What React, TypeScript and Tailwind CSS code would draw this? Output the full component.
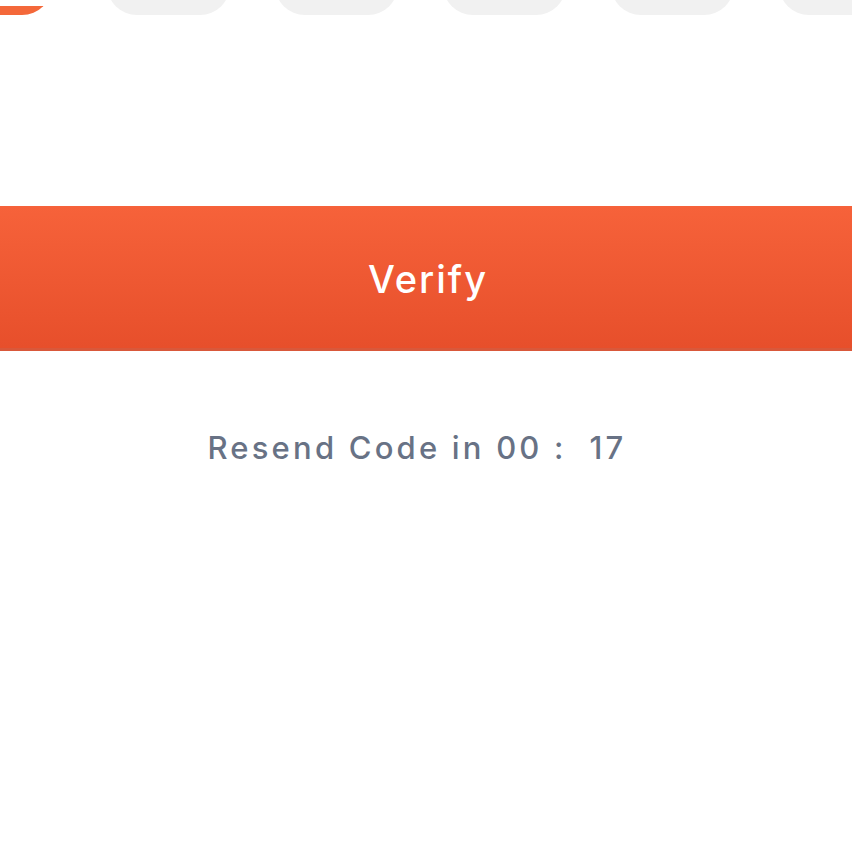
const boxes = [0, 1, 2, 3, 4]

export default function App() {
  return (
    <div className="w-[852px] h-[852px] bg-white overflow-hidden" style={{ fontFamily: 'Inter, "Open Sans", sans-serif' }}>
      <div className="flex items-end h-[15px] ml-[-72px]">
        <div className="shrink-0 w-[124px] h-[9px] overflow-hidden">
          <div className="w-[124px] h-[60px] mt-[-51px] rounded-[30px] bg-[#F4683A]" />
        </div>
        {boxes.map((i) => (
          <div key={i} className={(i === 0 ? "ml-[55px] " : "ml-[45px] ") + "shrink-0 w-[123px] h-[60px] rounded-[30px] bg-[#F1F1F1]"} />
        ))}
      </div>
      <div className="mt-[191px] h-[145px] flex items-center justify-center pt-[4px] pl-[4px] bg-gradient-to-b from-[#F6623A] to-[#E74F2B] border-b-[3px] border-[#D9583A]">
        <span className="text-[38px] font-medium text-white tracking-[2px]">Verify</span>
      </div>
      <div className="mt-[74px] flex justify-center pr-[18px]">
        <span className="text-[31px] font-medium text-[#687285] tracking-[3.2px] whitespace-pre">Resend Code in 00 :  17</span>
      </div>
    </div>
  )
}
